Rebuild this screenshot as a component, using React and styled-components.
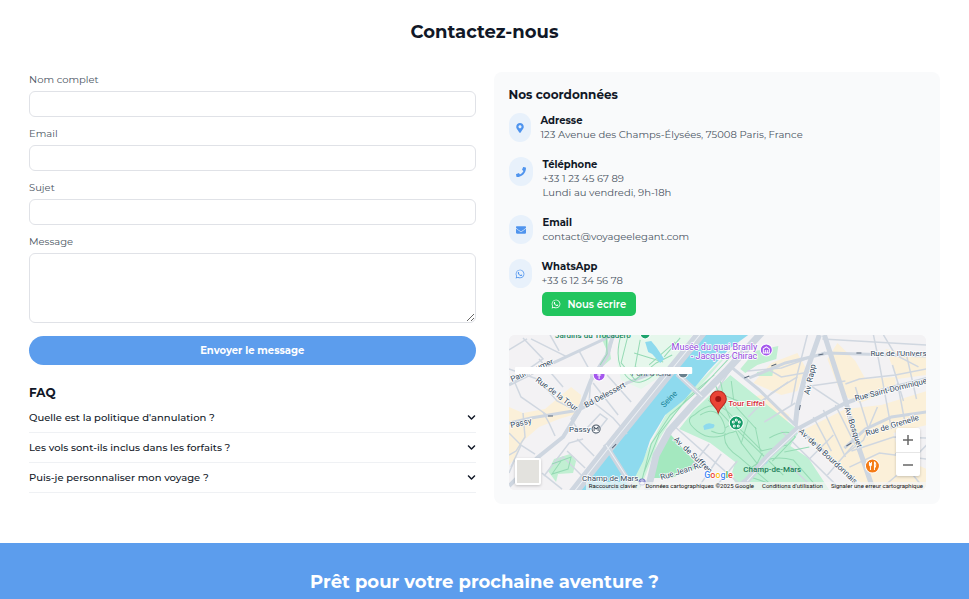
import React, { useState } from 'react';
import styled, { createGlobalStyle } from 'styled-components';
import { FaMapMarkerAlt, FaPhone, FaEnvelope, FaWhatsapp, FaChevronDown } from 'react-icons/fa';

const ink = '#111827';
const muted = '#4b5563';
const blue = '#5c9ded';

const GlobalStyle = createGlobalStyle`
  *, *::before, *::after { box-sizing: border-box; }
  body {
    margin: 0;
    background: #fff;
    color: ${ink};
    font-family: Montserrat, Inter, sans-serif;
    font-size: 10px;
    line-height: 15px;
    overflow-x: hidden;
  }
  h1, h2, h3, p { margin: 0; }
  button, input, textarea { font: inherit; }
`;

const ContactSection = styled.section`
  padding: 18px 29px 39px;
`;

const PageTitle = styled.h1`
  margin-bottom: 26px;
  font-size: 18px;
  line-height: 28px;
  font-weight: 700;
  text-align: center;
`;

const Columns = styled.div`
  display: grid;
  grid-template-columns: repeat(2, minmax(0, 1fr));
  gap: 18px;
`;

const Form = styled.form`
  display: flex;
  flex-direction: column;
  gap: 9px;
`;

const Field = styled.div`
  display: flex;
  flex-direction: column;
  gap: 4px;
`;

const Label = styled.label`
  color: ${muted};
`;

const TextInput = styled.input`
  width: 100%;
  height: 26px;
  padding: 4px 10px;
  border: 1px solid #e0e2e7;
  border-radius: 6px;
  background: #fff;
`;

const TextArea = styled.textarea`
  width: 100%;
  height: 70px;
  padding: 4px 10px;
  border: 1px solid #e0e2e7;
  border-radius: 6px;
  background: #fff;
  resize: vertical;
`;

const SubmitButton = styled.button`
  height: 29px;
  margin-top: 4px;
  border: 0;
  border-radius: 15px;
  background: ${blue};
  color: #fff;
  font-weight: 700;
  cursor: pointer;
`;

const SectionTitle = styled.h2`
  font-size: 12px;
  line-height: 18px;
  font-weight: 700;
`;

const Faq = styled.div`
  margin-top: 19px;
`;

const Question = styled.button`
  display: flex;
  align-items: center;
  justify-content: space-between;
  width: 100%;
  padding: 7px 0;
  border: 0;
  border-bottom: 1px solid #eff1f4;
  background: none;
  color: ${ink};
  font-weight: 500;
  text-align: left;
  cursor: pointer;

  svg { width: 9px; height: 9px; }
`;

const FaqItems = styled.div`
  display: flex;
  flex-direction: column;
  margin-top: 1px;
`;

const Card = styled.aside`
  padding: 14px 14px 14px 15px;
  border-radius: 8px;
  background: #f9fafb;
`;

const ContactList = styled.div`
  display: flex;
  flex-direction: column;
  gap: 15px;
  margin: 9px 0 19px;
`;

const ContactRow = styled.div`
  display: flex;
  align-items: flex-start;
  gap: 10px;
`;

const IconBadge = styled.span`
  display: flex;
  flex: none;
  align-items: center;
  justify-content: center;
  width: ${(p) => p.$width}px;
  height: 29px;
  border-radius: 12px;
  background: #e8f1fb;
  color: #4f94ee;

  svg { width: 10px; height: 10px; }
`;

const ContactName = styled.h3`
  font-size: 10px;
  line-height: 15px;
  font-weight: 700;
`;

const ContactText = styled.p`
  color: ${muted};
  line-height: 14px;
`;

const WhatsAppLink = styled.a`
  display: flex;
  align-items: center;
  width: fit-content;
  gap: 7px;
  height: 24px;
  margin-top: 4px;
  padding: 0 10px 0 9px;
  border-radius: 5px;
  background: #22c55e;
  color: #fff;
  font-weight: 600;
  text-decoration: none;

  svg { width: 10px; height: 10px; }
`;

const MapFrame = styled.div`
  position: relative;
  height: 155px;
  border-radius: 6px;
  overflow: hidden;
  background: #f3f2f4;
  font-family: Roboto, sans-serif;
`;

const MapDrawing = styled.svg`
  display: block;
  width: 100%;
  height: 100%;
`;

const MapLayerButton = styled.button`
  position: absolute;
  left: 6px;
  bottom: 5px;
  width: 26px;
  height: 27px;
  border: 2px solid #fff;
  border-radius: 2px;
  background: #e3e2de;
  box-shadow: 0 1px 3px #0003;
`;

const ZoomControls = styled.div`
  position: absolute;
  right: 6px;
  bottom: 14px;
  display: flex;
  flex-direction: column;
  width: 24px;
  border-radius: 2px;
  background: #fff;
  box-shadow: 0 1px 3px #0003;
`;

const ZoomButton = styled.button`
  display: flex;
  align-items: center;
  justify-content: center;
  height: 24px;
  padding: 0;
  border: 0;
  background: none;

  & + & { border-top: 1px solid #e6e6e6; }
`;

const MapFooter = styled.div`
  position: absolute;
  right: 0;
  bottom: 0;
  display: flex;
  gap: 8px;
  padding: 0 3px;
  background: #f5f5f5b8;
  color: #111;
  font-size: 6px;
  line-height: 8px;
  white-space: nowrap;

  a { color: inherit; text-decoration: none; }
`;

const CallToAction = styled.section`
  padding: 25px 29px 3px;
  background: ${blue};
  color: #fff;
  text-align: center;
`;

const CallTitle = styled.h2`
  font-size: 18px;
  line-height: 28px;
  font-weight: 700;
`;

const beige = [
  'M0 72L14 78L36 74L62 52L72 60L70 78L50 84L30 92L14 106L6 124L0 130Z',
  'M262 28L288 18L296 32L288 56L272 60L244 48Z',
  'M328 8L346 26L356 44L386 42L386 54L350 68L332 60L318 24Z',
  'M376 14L417 22V40L388 44Z',
  'M292 96L336 74L372 70L417 56V90L384 98L390 122L417 134V155H362L330 132L308 112Z',
  'M222 66L252 60L280 80L276 92Z',
];

const minorStreets = [
  'M0 34L28 44L36 52L48 66L66 75', 'M6 48L12 62L38 80', 'M0 15L18 4', 'M14 3L34 24L14 38',
  'M22 4L58 22', 'M30 24L54 52', 'M70 16L82 38L80 68', 'M80 64L104 83L118 99',
  'M84 48L109 80', 'M98 40L122 67', 'M76 62L62 84L69 95', 'M77 94L91 79L98 84L86 99',
  'M68 104L85 121', 'M58 116L76 133', 'M46 129L54 122L72 140', 'M35 141L60 108L74 104',
  'M14 78L16 102L7 116L0 120', 'M12 110L26 119', 'M34 77L40 88L46 101', 'M0 98L12 110L2 132',
  'M33 138L53 154', 'M6 124L0 138', 'M41 0L50 16', 'M104 0L100 20L92 33',
  'M200 109L180 134', 'M212 119L190 151', 'M228 126L208 150', 'M166 92L235 153',
  'M221 35L206 58', 'M258 34L272 42L300 37', 'M298 0L288 39L282 70', 'M300 50L333 72',
  'M294 52L336 46', 'M336 49L350 44L386 40L417 34', 'M238 36L272 33L316 17',
  'M313 4L417 10', 'M364 0L369 24L382 94', 'M374 0L386 20L409 32', 'M346 52L359 94',
  'M388 48L396 90', 'M304 82L322 116', 'M314 75L336 122', 'M326 70L350 118',
  'M272 96L332 155', 'M342 116L384 102L417 103', 'M340 132L370 118L417 124',
  'M386 118L410 148', 'M318 140L344 110', 'M300 124L324 100', 'M239 82L262 58L288 42',
  'M252 66L279 47', 'M255 87L286 68', 'M383 30L394 66', 'M397 20L407 64',
  'M368 72L354 105L336 119', 'M417 110L390 138L370 155', 'M280 130L306 155',
];

const majorStreets = [
  { d: 'M0 50L40 30L104 0', w: 3 },
  { d: 'M0 88L22 83L70 75L118 48L150 36', w: 3 },
  { d: 'M0 151L28 123L54 102L70 76L82 45L98 20L104 0', w: 4 },
  { d: 'M223 33L250 55L290 94L322 123L352 155', w: 3 },
  { d: 'M310 0L296 40L288 72L286 90', w: 5 },
  { d: 'M315 0L336 65L346 103L364 155', w: 5 },
  { d: 'M240 43L276 28L318 18L417 21', w: 3 },
  { d: 'M286 95L336 68L374 55L417 44', w: 4 },
  { d: 'M335 113L356 94L382 82L417 77', w: 3 },
];

const parkPaths = [
  'M206 50L232 108', 'M199 65L235 102L274 140', 'M211 45L214 60L229 66', 'M222 46L225 70L247 94',
  'M185 80Q205 62 221 79T220 98Q202 107 188 96T185 80', 'M191 80Q207 70 214 87T202 96',
  'M216 93Q223 86 235 98L253 116', 'M216 98Q212 110 230 122L259 147',
  'M239 85L232 108L256 139', 'M246 92L251 116L278 110', 'M253 118L241 142L280 155',
  'M260 103Q279 92 286 102L263 126', 'M240 134Q260 118 284 125L307 151', 'M275 117L300 112',
];

const labels = [
  { t: 'Passy', x: 2, y: 93, r: -13 },
  { t: 'Paul Doumer', x: 3, y: 47, r: -24 },
  { t: 'Rue de la Tour', x: 26, y: 46, r: 37 },
  { t: 'Bd Delessert', x: 77, y: 73, r: -28 },
  { t: 'Passy', x: 60, y: 97, r: 0 },
  { t: 'Champ de Mars', x: 73, y: 146, r: 0 },
  { t: 'Rue Jean Rey', x: 152, y: 145, r: -17 },
  { t: 'Av. de Suffren', x: 164, y: 105, r: 43 },
  { t: 'Av. Rapp', x: 300, y: 60, r: -78 },
  { t: "Rue de l'Univers", x: 361, y: 21, r: 0 },
  { t: 'Rue Saint-Dominique', x: 346, y: 66, r: -14 },
  { t: 'Av. Bosquet', x: 335, y: 73, r: 72 },
  { t: 'Rue de Grenelle', x: 357, y: 101, r: -17 },
  { t: 'Av. de la Bourdonnais', x: 289, y: 97, r: 43 },
];

function ParisMap() {
  return (
    <MapDrawing viewBox="0 0 417 155" preserveAspectRatio="xMidYMid slice" role="img" aria-label="Plan du quartier de la Tour Eiffel">
      <rect width="417" height="155" fill="#f3f2f4" />
      <g fill="#fbf0d9">{beige.map((d) => <path key={d} d={d} />)}</g>
      <path fill="#e6f7ec" d="M111 0H183L158 37L132 54L112 45L108 28Z" />
      <path fill="#c1efd2" d="M98 0L102 24L94 31L97 14L91 0ZM39 136L45 124L61 119L67 126L64 138L49 139L47 147ZM246 16L269 11L267 24L248 30L236 38L231 34ZM248 37L264 35L263 41H246Z" />
      <path fill="#cdf3dc" d="M231 5L193 49L165 80L149 106L137 139L130 155L120 152L138 115L157 79L178 59L194 43Z" />
      <path fill="#8edaee" d="M196 0H239L221 13L199 36L176 64L156 80L141 105L134 126L125 144L115 155H61L79 137L109 104L133 76L152 53Z" />
      <path fill="#c0f0d5" d="M221 40L290 96L281 111L299 123L320 155H230L222 140L226 127L201 108L170 94L184 76L204 57Z" />
      <path fill="#a4e8bf" d="M161 99L190 132L162 143H144L148 119Z" />
      <g fill="none" stroke="#d0d7e0" strokeWidth="1.5">{minorStreets.map((d) => <path key={d} d={d} />)}</g>
      <g fill="none" stroke="#ced6e0">{majorStreets.map(({ d, w }) => <path key={d} d={d} strokeWidth={w} />)}</g>
      <g fill="none" stroke="#95dab4" strokeWidth="1">
        {parkPaths.map((d) => <path key={d} d={d} />)}
        <path d="M112 0Q104 26 117 41T150 35M119 0L112 28L126 45L147 28L163 20M131 5L126 32L155 38M140 30L166 7M125 18L154 27M171 3L155 22M97 0L98 19L91 30M224 19L194 51L161 80L142 109L131 152M205 40L178 63L150 99L135 137" />
        <path d="M43 129L62 122L59 134L43 139L52 126" />
      </g>
      <path fill="#8edaee" d="M136 7L142 6L147 12L155 24L151 28L143 19L139 17ZM194 91Q198 87 203 89Q207 89 204 93L195 95ZM254 127L260 121L258 128L253 131Z" />
      <g fill="none" stroke="#ced6e0">
        <path strokeWidth="10" d="M193 -3L154 45L104 107L64 158" />
        <path strokeWidth="7" d="M254 -4L218 35L187 66L160 96L147 120L138 158" />
        <path strokeWidth="5" d="M168 39L193 62M96 109L122 150" />
        <path strokeWidth="6" d="M288 94L259 121L238 145L222 158" />
      </g>
      <g fill="none" stroke="#eef1f5" strokeWidth="1">
        <path d="M193 -3L154 45L104 107L64 158M97 110L122 149M168 39L193 62M290 94L259 123L238 146" />
      </g>
      <g fill="none" stroke="#59677a" strokeWidth="1"><path d="M39 81H44M103 113L107 109M235 43L240 41M262 31L267 29M309 20L314 19M347 18H352M290 75L291 70M337 111L342 108" /></g>

      <g fill="#344a60" stroke="#fff" strokeWidth="1.5" paintOrder="stroke" fontSize="8">
        {labels.map((l) => <text key={l.t + l.y} x={l.x} y={l.y} transform={`rotate(${l.r} ${l.x} ${l.y})`}>{l.t}</text>)}
      </g>
      <text x="46" y="3" fill="#16865d" fontSize="8" fontWeight="500">Jardins du Trocadéro</text>
      <text x="122" y="41" fill="#526475" fontSize="8">Pont d'Iéna</text>
      <text x="155" y="73" transform="rotate(-46 155 73)" fill="#168095" fontSize="8">Seine</text>
      <g fill="#9147dd" stroke="#fff" strokeWidth="1.5" paintOrder="stroke" fontSize="9">
        <text x="248" y="15" textAnchor="end">Musée du quai Branly</text>
        <text x="248" y="24" textAnchor="end">- Jacques Chirac</text>
      </g>
      <text x="219" y="71" fill="#d52d38" stroke="#fff" strokeWidth="1.5" paintOrder="stroke" fontSize="8" fontWeight="500">Tour Eiffel</text>
      <text x="234" y="137" fill="#24805a" fontSize="8" fontWeight="500">Champ-de-Mars</text>

      <circle cx="87" cy="94" r="4" fill="#fff" stroke="#4b5968" />
      <path d="M85 96V92L87 94L89 92V96" fill="none" stroke="#4b5968" />
      <circle cx="133" cy="147" r="3" fill="#fff" stroke="#7475c4" />
      <path d="M131 148V146H135V148" fill="none" stroke="#7475c4" />
      <circle cx="136" cy="-1" r="5" fill="#1ca36c" stroke="#fff" />
      <circle cx="90" cy="40" r="6" fill="#a457ed" stroke="#fff" />
      <path d="M90 38V44M88 40H92" stroke="#fff" />
      <circle cx="174" cy="38" r="5" fill="#68808d" stroke="#fff" />
      <circle cx="257" cy="15" r="6" fill="#a457ed" stroke="#fff" />
      <path d="M254 14L257 12L260 14V18H254ZM256 15V18M258 15V18" fill="none" stroke="#fff" />
      <circle cx="227" cy="88" r="7" fill="#149b67" stroke="#fff" />
      <g fill="none" stroke="#fff"><circle cx="227" cy="85" r="1" /><circle cx="230" cy="87" r="1" /><circle cx="229" cy="91" r="1" /><circle cx="225" cy="91" r="1" /><circle cx="224" cy="87" r="1" /></g>
      <circle cx="363" cy="131" r="7" fill="#f57c16" stroke="#fff" />
      <path d="M360 127V130Q361 132 362 130V127M361 128V135M365 135V127Q367 128 366 132H365" fill="none" stroke="#fff" />
      <path d="M209 78C207 71 201 70 201 64A8 8 0 0 1 217 64C217 70 211 71 209 78Z" fill="#ea4335" stroke="#b92d23" />
      <circle cx="209" cy="64" r="3" fill="#a31513" />
      <rect x="6" y="32" width="177" height="7" rx="1" fill="#fff" />
      <text x="195" y="143" fontSize="9" fontWeight="500" stroke="#fff" strokeWidth="1.5" paintOrder="stroke">
        <tspan fill="#4285f4">G</tspan><tspan fill="#ea4335">o</tspan><tspan fill="#fbbc05">o</tspan><tspan fill="#4285f4">g</tspan><tspan fill="#34a853">l</tspan><tspan fill="#ea4335">e</tspan>
      </text>
    </MapDrawing>
  );
}

const fields = [
  { id: 'nom', label: 'Nom complet', type: 'text' },
  { id: 'email', label: 'Email', type: 'email' },
  { id: 'sujet', label: 'Sujet', type: 'text' },
];

const questions = [
  "Quelle est la politique d'annulation ?",
  'Les vols sont-ils inclus dans les forfaits ?',
  'Puis-je personnaliser mon voyage ?',
];

const contacts = [
  { name: 'Adresse', lines: ['123 Avenue des Champs-Élysées, 75008 Paris, France'], Icon: FaMapMarkerAlt, width: 22 },
  { name: 'Téléphone', lines: ['+33 1 23 45 67 89', 'Lundi au vendredi, 9h-18h'], Icon: FaPhone, width: 24 },
  { name: 'Email', lines: ['contact@voyageelegant.com'], Icon: FaEnvelope, width: 24 },
  { name: 'WhatsApp', lines: ['+33 6 12 34 56 78'], Icon: FaWhatsapp, width: 23, link: 'Nous écrire' },
];

export default function App() {
  const [openQuestion, setOpenQuestion] = useState(null);
  return (
    <>
      <GlobalStyle />
      <main>
        <ContactSection>
          <PageTitle>Contactez-nous</PageTitle>
          <Columns>
            <div>
              <Form onSubmit={(e) => e.preventDefault()}>
                {fields.map((f) => (
                  <Field key={f.id}>
                    <Label htmlFor={f.id}>{f.label}</Label>
                    <TextInput id={f.id} name={f.id} type={f.type} />
                  </Field>
                ))}
                <Field>
                  <Label htmlFor="message">Message</Label>
                  <TextArea id="message" name="message" />
                </Field>
                <SubmitButton type="submit">Envoyer le message</SubmitButton>
              </Form>
              <Faq>
                <SectionTitle>FAQ</SectionTitle>
                <FaqItems>
                  {questions.map((q, i) => (
                    <Question
                      key={q}
                      type="button"
                      aria-expanded={openQuestion === i}
                      onClick={() => setOpenQuestion(openQuestion === i ? null : i)}
                    >
                      {q}
                      <FaChevronDown aria-hidden="true" />
                    </Question>
                  ))}
                </FaqItems>
              </Faq>
            </div>
            <Card>
              <SectionTitle>Nos coordonnées</SectionTitle>
              <ContactList>
                {contacts.map(({ name, lines, Icon, width, link }) => (
                  <ContactRow key={name}>
                    <IconBadge $width={width}><Icon aria-hidden="true" /></IconBadge>
                    <div>
                      <ContactName>{name}</ContactName>
                      {lines.map((line) => <ContactText key={line}>{line}</ContactText>)}
                      {link && <WhatsAppLink href="https://wa.me/33612345678"><FaWhatsapp aria-hidden="true" />{link}</WhatsAppLink>}
                    </div>
                  </ContactRow>
                ))}
              </ContactList>
              <MapFrame>
                <ParisMap />
                <MapLayerButton type="button" aria-label="Changer de fond de carte" />
                <ZoomControls>
                  <ZoomButton type="button" aria-label="Zoom avant">
                    <svg width="10" height="10" viewBox="0 0 10 10"><path d="M0 5H10M5 0V10" stroke="#666" strokeWidth="1.5" /></svg>
                  </ZoomButton>
                  <ZoomButton type="button" aria-label="Zoom arrière">
                    <svg width="10" height="10" viewBox="0 0 10 10"><path d="M0 5H10" stroke="#666" strokeWidth="1.5" /></svg>
                  </ZoomButton>
                </ZoomControls>
                <MapFooter>
                  <span>Raccourcis clavier</span>
                  <span>Données cartographiques ©2025 Google</span>
                  <a href="#conditions">Conditions d'utilisation</a>
                  <a href="#signaler">Signaler une erreur cartographique</a>
                </MapFooter>
              </MapFrame>
            </Card>
          </Columns>
        </ContactSection>
        <CallToAction>
          <CallTitle>Prêt pour votre prochaine aventure ?</CallTitle>
        </CallToAction>
      </main>
    </>
  );
}
